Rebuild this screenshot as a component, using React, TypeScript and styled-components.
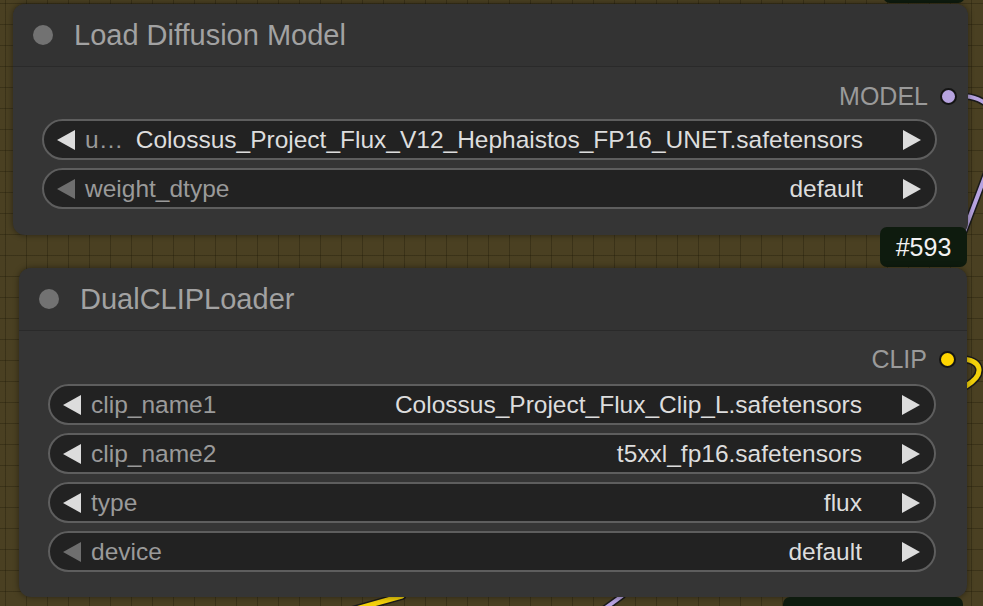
import React from "react";
import styled, { createGlobalStyle } from "styled-components";

const GlobalStyle = createGlobalStyle`
  html, body {
    margin: 0;
    padding: 0;
    background: #4a4022;
  }
  body {
    font-family: "Liberation Sans", Arial, sans-serif;
  }
`;

const Canvas = styled.div`
  position: relative;
  width: 983px;
  height: 606px;
  overflow: hidden;
  background-color: #4a4022;
  background-image:
    linear-gradient(to right, rgba(30, 24, 8, 0.35) 1px, transparent 1px),
    linear-gradient(to bottom, rgba(30, 24, 8, 0.35) 1px, transparent 1px);
  background-size: 21px 21px;
  background-position: 5px 3px;
`;

const Wires = styled.svg`
  position: absolute;
  inset: 0;
  width: 983px;
  height: 606px;
  pointer-events: none;
`;

const Node = styled.div<{ $x: number; $y: number; $w: number; $h: number }>`
  position: absolute;
  left: ${(p) => p.$x}px;
  top: ${(p) => p.$y}px;
  width: ${(p) => p.$w}px;
  height: ${(p) => p.$h}px;
  box-sizing: border-box;
  background: #353535;
  border-radius: 12px;
  box-shadow: 0 0 6px rgba(0, 0, 0, 0.45);
  display: flex;
  flex-direction: column;
`;

const TitleBar = styled.div`
  height: 62px;
  flex: none;
  display: flex;
  align-items: center;
  padding-left: 20px;
  gap: 21px;
  border-bottom: 1px solid #2a2a2a;
  background: #333333;
  border-radius: 12px 12px 0 0;
`;

const TitleDot = styled.span`
  width: 20px;
  height: 20px;
  border-radius: 50%;
  background: #727272;
  flex: none;
`;

const Title = styled.span`
  font-size: 29px;
  color: #a2a2a2;
`;

const Body = styled.div<{ $top: number }>`
  display: flex;
  flex-direction: column;
  padding: ${(p) => p.$top}px 31px 0 29px;
`;

const OutputRow = styled.div<{ $after: number }>`
  height: 28px;
  display: flex;
  align-items: center;
  justify-content: flex-end;
  gap: 12px;
  margin-right: -20px;
  margin-bottom: ${(p) => p.$after}px;
`;

const OutputLabel = styled.span`
  font-size: 25px;
  color: #9a9a9a;
`;

const OutputDot = styled.span<{ $color: string }>`
  width: 13px;
  height: 13px;
  border-radius: 50%;
  background: ${(p) => p.$color};
  border: 2px solid #141414;
  flex: none;
`;

const Widgets = styled.div`
  display: flex;
  flex-direction: column;
  gap: 8px;
`;

const Widget = styled.div`
  height: 41px;
  box-sizing: border-box;
  border: 2px solid #5e5e5e;
  border-radius: 21px;
  background: #222222;
  display: flex;
  align-items: center;
  padding: 0 13px 0 12px;
  font-size: 24.5px;
  white-space: nowrap;
`;

const Arrow = styled.svg<{ $dim?: boolean }>`
  width: 21px;
  height: 22px;
  flex: none;
  fill: ${(p) => (p.$dim ? "#6e6e6e" : "#dcdcdc")};
`;

const Label = styled.span`
  color: #9a9a9a;
  margin-left: 8px;
  flex: none;
`;

const Value = styled.span`
  color: #dddddd;
  margin-left: auto;
  margin-right: 38px;
  padding-left: 10px;
  min-width: 0;
  overflow: hidden;
`;

const Badge = styled.div<{ $x: number; $y: number; $w: number }>`
  position: absolute;
  left: ${(p) => p.$x}px;
  top: ${(p) => p.$y}px;
  width: ${(p) => p.$w}px;
  height: 40px;
  box-sizing: border-box;
  background: #0e1b0e;
  border-radius: 7px;
  color: #f2f2f2;
  font-size: 25px;
  display: flex;
  align-items: center;
  justify-content: center;
`;

const LeftArrow = ({ dim }: { dim?: boolean }) => (
  <Arrow $dim={dim} viewBox="0 0 21 22">
    <polygon points="19,1 19,21 1,11" />
  </Arrow>
);

const RightArrow = () => (
  <Arrow viewBox="0 0 21 22">
    <polygon points="2,1 2,21 20,11" />
  </Arrow>
);

interface WidgetData {
  label: string;
  value: string;
  dim?: boolean;
}

const WidgetRow = ({ label, value, dim }: WidgetData) => (
  <Widget>
    <LeftArrow dim={dim} />
    <Label>{label}</Label>
    <Value>{value}</Value>
    <RightArrow />
  </Widget>
);

const diffusionWidgets: WidgetData[] = [
  { label: "u…", value: "Colossus_Project_Flux_V12_Hephaistos_FP16_UNET.safetensors" },
  { label: "weight_dtype", value: "default", dim: true },
];

const clipWidgets: WidgetData[] = [
  { label: "clip_name1", value: "Colossus_Project_Flux_Clip_L.safetensors" },
  { label: "clip_name2", value: "t5xxl_fp16.safetensors" },
  { label: "type", value: "flux" },
  { label: "device", value: "default", dim: true },
];

export default function App() {
  return (
    <>
      <GlobalStyle />
      <Canvas>
        <Wires viewBox="0 0 983 606">
          <g fill="none" strokeLinecap="round">
            <path d="M 960 96 C 975 96, 982 100, 995 110" stroke="#1a1a1a" strokeWidth="7" />
            <path d="M 960 96 C 975 96, 982 100, 995 110" stroke="#b7a3e0" strokeWidth="4" />
            <path d="M 995 150 L 964 232" stroke="#1a1a1a" strokeWidth="7" />
            <path d="M 995 150 L 964 232" stroke="#b7a3e0" strokeWidth="4" />
            <path d="M 960 359 C 982 359, 986 374, 966 386" stroke="#1a1a1a" strokeWidth="8" />
            <path d="M 960 359 C 982 359, 986 374, 966 386" stroke="#f2d10a" strokeWidth="5" />
            <path d="M 345 612 L 402 596" stroke="#1a1a1a" strokeWidth="8" />
            <path d="M 345 612 L 402 596" stroke="#f2d10a" strokeWidth="5" />
            <path d="M 600 612 L 622 596" stroke="#1a1a1a" strokeWidth="7" />
            <path d="M 600 612 L 622 596" stroke="#b7a3e0" strokeWidth="4" />
          </g>
        </Wires>

        <Badge $x={883} $y={-37} $w={82} />

        <Node $x={13} $y={4} $w={955} $h={231}>
          <TitleBar>
            <TitleDot />
            <Title>Load Diffusion Model</Title>
          </TitleBar>
          <Body $top={15}>
            <OutputRow $after={9}>
              <OutputLabel>MODEL</OutputLabel>
              <OutputDot $color="#b7a3e0" />
            </OutputRow>
            <Widgets>
              {diffusionWidgets.map((w, i) => (
                <WidgetRow key={i} {...w} />
              ))}
            </Widgets>
          </Body>
        </Node>

        <Badge $x={880} $y={227} $w={87}>#593</Badge>

        <Node $x={19} $y={268} $w={948} $h={329}>
          <TitleBar>
            <TitleDot />
            <Title>DualCLIPLoader</Title>
          </TitleBar>
          <Body $top={14}>
            <OutputRow $after={11}>
              <OutputLabel>CLIP</OutputLabel>
              <OutputDot $color="#ffd500" />
            </OutputRow>
            <Widgets>
              {clipWidgets.map((w, i) => (
                <WidgetRow key={i} {...w} />
              ))}
            </Widgets>
          </Body>
        </Node>

        <Badge $x={783} $y={597} $w={180}>↓ #591 clip</Badge>
      </Canvas>
    </>
  );
}
